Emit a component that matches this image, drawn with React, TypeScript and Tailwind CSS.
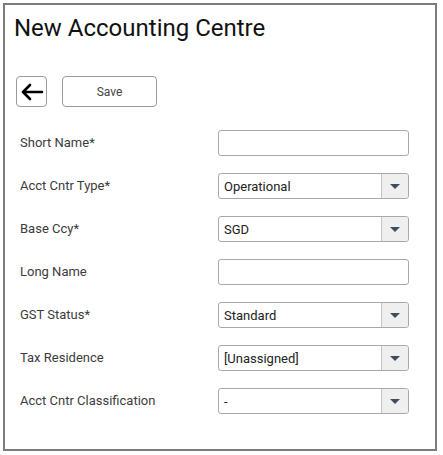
import { ReactNode } from "react";

const fields: { label: string; value?: string; select?: boolean }[] = [
  { label: "Short Name*" },
  { label: "Acct Cntr Type*", value: "Operational", select: true },
  { label: "Base Ccy*", value: "SGD", select: true },
  { label: "Long Name" },
  { label: "GST Status*", value: "Standard", select: true },
  { label: "Tax Residence", value: "[Unassigned]", select: true },
  { label: "Acct Cntr Classification", value: "-", select: true },
];

const BackArrow = () => (
  <svg width="24" height="18" viewBox="0 0 24 18" fill="none">
    <path
      d="M22 9H3M10 2L3 9l7 7"
      stroke="#000"
      strokeWidth="2.6"
      strokeLinecap="round"
      strokeLinejoin="round"
    />
  </svg>
);

const Field = ({ value, select }: { value?: string; select?: boolean }): ReactNode => {
  if (!select) {
    return <div className="h-[26px] w-[191px] rounded-[3px] border border-[#a9a9a9] bg-white" />;
  }
  return (
    <div className="flex h-[26px] w-[191px] rounded-[3px] border border-[#a9a9a9] bg-white">
      <div className="flex-1 pl-[5px] text-[13px] leading-[25px] text-[#222]">{value}</div>
      <div className="flex w-[27px] items-center justify-center border-l border-[#c4c4c4] bg-[#efefef] rounded-r-[3px]">
        <svg width="10" height="5" viewBox="0 0 10 5">
          <path d="M0 0h10L5 5z" fill="#3c4d5e" />
        </svg>
      </div>
    </div>
  );
};

const App = () => {
  return (
    <div className="h-[455px] w-[443px] bg-white pl-[3px] pt-[3px] font-['Roboto',sans-serif]">
      <div className="h-[448px] w-[434px] border-2 border-[#7c7c7c] bg-white">
        <h1 className="ml-[9px] mt-[9px] text-[24px] leading-[28px] font-normal text-[#111]">
          New Accounting Centre
        </h1>

        <div className="ml-[11px] mt-[34px] flex gap-[15px]">
          <button className="flex h-[31px] w-[31px] items-center justify-center rounded-[4px] border border-[#9a9a9a] bg-white">
            <BackArrow />
          </button>
          <button className="h-[31px] w-[95px] rounded-[4px] border border-[#9a9a9a] bg-white text-[12px] text-[#444]">
            Save
          </button>
        </div>

        <div className="ml-[15px] mt-[23px] flex flex-col gap-[17px]">
          {fields.map((f) => (
            <div key={f.label} className="flex items-center">
              <div className="w-[198px] text-[13px] text-[#3c3c3c]">{f.label}</div>
              <Field value={f.value} select={f.select} />
            </div>
          ))}
        </div>
      </div>
    </div>
  );
};

export default App;
